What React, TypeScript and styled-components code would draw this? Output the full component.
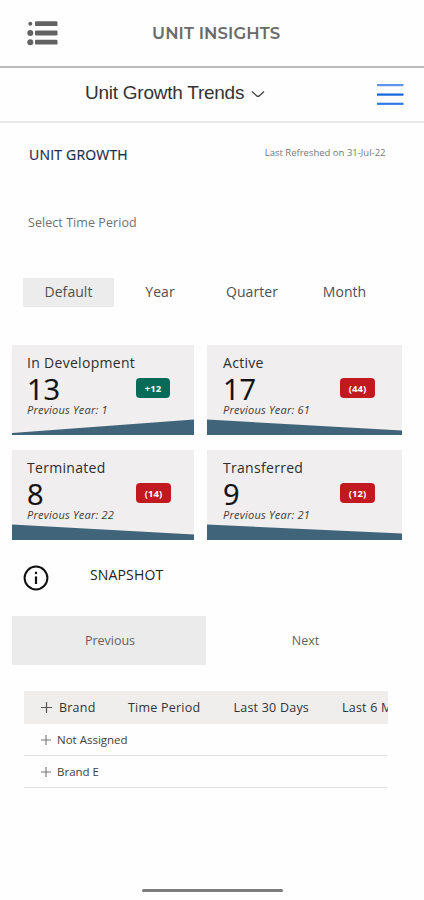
import React from "react";
import styled, { createGlobalStyle } from "styled-components";

const GlobalStyle = createGlobalStyle`
  * { box-sizing: border-box; }
  body {
    margin: 0;
    background: #fefefe;
    font-family: "Open Sans", "Noto Sans", sans-serif;
    color: #333;
  }
  button { font-family: inherit; border: 0; padding: 0; margin: 0; background: none; }
  svg { display: block; flex: none; }
`;

const Screen = styled.div`
  width: 424px;
  height: 900px;
  overflow: hidden;
  display: flex;
  flex-direction: column;
  background: #fefefe;
  white-space: nowrap;
`;

const AppBar = styled.header`
  height: 68px;
  flex: none;
  display: flex;
  align-items: center;
  padding-left: 26px;
  border-bottom: 2px solid #bcbcbc;
`;

const AppTitle = styled.h1`
  margin: 0 0 0 94px;
  font: 600 16.5px/24px "Montserrat", "Inter", sans-serif;
  letter-spacing: 0.12px;
  color: #6a6a6a;
`;

const PageBar = styled.nav`
  height: 55px;
  flex: none;
  display: flex;
  align-items: center;
  justify-content: space-between;
  padding: 0 20px 1px 85px;
  border-bottom: 2px solid #e8e8e8;
`;

const PagePicker = styled.button`
  display: flex;
  align-items: center;
  gap: 7px;
  font: 400 19px/24px "Liberation Sans", Arial, sans-serif;
  letter-spacing: -0.25px;
  margin-top: -2px;
  color: #333;
`;

const SectionHead = styled.div`
  display: flex;
  justify-content: space-between;
  height: 63px;
  padding: 0 38.5px 0 29px;
  flex: none;
`;

const SectionTitle = styled.h2`
  margin: 0;
  padding-top: 22px;
  font-size: 14px;
  font-weight: 400;
  line-height: 20px;
  letter-spacing: 0.2px;
  color: #1c2b4d;
  -webkit-text-stroke: 0.2px #1c2b4d;
`;

const Refreshed = styled.span`
  padding-top: 23px;
  font-size: 9.5px;
  line-height: 14px;
  color: #777;
`;

const PeriodLabel = styled.div`
  margin: 27px 0 0 28px;
  height: 20px;
  flex: none;
  font-size: 12.5px;
  line-height: 20px;
  letter-spacing: 0.06px;
  color: #727272;
`;

const Periods = styled.div`
  display: grid;
  grid-template-columns: 91px 92px 92px 93px;
  margin: 45px 0 0 23px;
  flex: none;
`;

const Period = styled.button<{ $active?: boolean }>`
  height: 29px;
  font-size: 14px;
  line-height: 27px;
  padding-bottom: 2px;
  letter-spacing: 0.05px;
  color: #505050;
  background: ${(p) => (p.$active ? "#ececec" : "transparent")};
`;

const Cards = styled.section`
  display: grid;
  grid-template-columns: 182px 195px;
  grid-auto-rows: 90px;
  gap: 15px 13px;
  margin: 38px 0 0 12px;
  flex: none;
`;

const Card = styled.article`
  display: flex;
  flex-direction: column;
  background: #f0eeef;
`;

const CardBody = styled.div<{ $inset: number }>`
  display: grid;
  grid-template-columns: 1fr 35px;
  grid-template-rows: 20px 28px 14px;
  padding: 8px ${(p) => (p.$inset === 15 ? 23 : 27)}px 0 ${(p) => p.$inset}px;
  height: 74px;
`;

const CardTitle = styled.h3`
  grid-column: 1 / -1;
  margin: 0;
  font-size: 14px;
  font-weight: 400;
  line-height: 20px;
  letter-spacing: 0.3px;
  color: #2d2d2d;
`;

const CardValue = styled.div`
  font-size: 29px;
  line-height: 32px;
  color: #111;
  -webkit-text-stroke: 0.2px #111;
`;

const Delta = styled.span<{ $up?: boolean }>`
  width: ${(p) => (p.$up ? 34 : 35)}px;
  height: 20px;
  margin-top: 5px;
  border-radius: 4px;
  background: ${(p) => (p.$up ? "#086b58" : "#c2181f")};
  color: #fff;
  font-size: 9.5px;
  font-weight: 700;
  line-height: 22px;
  text-align: center;
`;

const CardNote = styled.div`
  margin-top: 2px;
  grid-column: 1 / -1;
  font-size: 11px;
  font-style: italic;
  line-height: 14px;
  letter-spacing: 0.22px;
  color: #3b3b3b;
`;

const SnapshotHead = styled.div`
  display: flex;
  height: 26px;
  margin: 25px 0 0 23px;
  flex: none;
`;

const SnapshotTitle = styled.h2`
  margin: 0 0 0 41px;
  font-size: 14px;
  font-weight: 400;
  line-height: 20px;
  letter-spacing: 0.15px;
  color: #222;
`;

const Pager = styled.div`
  display: grid;
  grid-template-columns: 194px 199px;
  margin: 25px 0 0 12px;
  flex: none;
`;

const PagerButton = styled.button<{ $active?: boolean }>`
  height: 49px;
  padding: 0 0 0 ${(p) => (p.$active ? 2 : 0)}px;
  font-size: 12.5px;
  color: #626262;
  background: ${(p) => (p.$active ? "#ebebeb" : "transparent")};
`;

const Table = styled.div`
  width: 364px;
  margin: 26px 0 0 24px;
  overflow: hidden;
  flex: none;
`;

const HeadRow = styled.div`
  display: grid;
  grid-template-columns: 104px 105.5px 108.5px 80px;
  align-items: center;
  height: 33px;
  padding-bottom: 1px;
  background: #f0eeed;
  font-size: 12.5px;
  letter-spacing: 0.22px;
  color: #333;
`;

const Expander = styled.div<{ $gap: number }>`
  display: flex;
  align-items: center;
  gap: ${(p) => p.$gap}px;
  padding-left: 17px;
`;

const Row = styled.div`
  display: flex;
  align-items: center;
  height: 32px;
  border-bottom: 1px solid #e4e4e4;
  font-size: 11.5px;
  color: #414141;
`;

const HomeIndicator = styled.div`
  width: 141px;
  height: 3px;
  margin: auto auto 8px 142px;
  border-radius: 2px;
  background: #7c7c7c;
`;

const ListIcon = () => (
  <svg width="32" height="26" viewBox="0 0 32 26" fill="#626262">
    <circle cx="4.3" cy="3.7" r="2" />
    <circle cx="4.3" cy="13" r="3" />
    <circle cx="4.3" cy="22.2" r="3" />
    <rect x="9" y="1.3" width="22.5" height="4.8" rx="1.2" />
    <rect x="9" y="10.6" width="22.5" height="4.8" rx="1.2" />
    <rect x="9" y="19.8" width="22.5" height="4.8" rx="1.2" />
  </svg>
);

const Chevron = () => (
  <svg width="14" height="10" viewBox="0 -2 14 10" fill="none" stroke="#444" strokeWidth="1.4">
    <path d="M1 1.5L5.8 5.9Q7 6.8 8.2 5.9L13 1.5" />
  </svg>
);

const MenuIcon = () => (
  <svg width="27" height="23" viewBox="0 0 27 23" strokeWidth="2.2">
    <path d="M0 2.1H26.5" stroke="#5d93e8" />
    <path d="M0 11.6H26.5" stroke="#1264dc" />
    <path d="M0 20.8H26.5" stroke="#2f7ae6" />
  </svg>
);

const InfoIcon = () => (
  <svg width="26" height="26" viewBox="0 0 26 26" fill="none" stroke="#111">
    <circle cx="13" cy="13" r="11.4" strokeWidth="2" />
    <path d="M13 11.4V19" strokeWidth="2.2" />
    <path d="M13 6.8V9.1" strokeWidth="2.2" />
  </svg>
);

const Plus = ({ size, color }: { size: number; color: string }) => (
  <svg width={size} height={size} viewBox="0 0 10 10" stroke={color} strokeWidth="1.1">
    <path d="M5 0V10M0 5H10" />
  </svg>
);

const Wedge = ({ width, left, right }: { width: number; left: number; right: number }) => (
  <svg width={width} height="16" viewBox={`0 0 ${width} 16`}>
    <path d={`M0 ${16 - left}L${width} ${16 - right}V16H0Z`} fill="#40657a" />
  </svg>
);

const metrics = [
  { title: "In Development", value: 13, delta: "+12", previous: 1, up: true, left: 2, right: 15.5 },
  { title: "Active", value: 17, delta: "(44)", previous: 61, up: false, left: 15.5, right: 4.5 },
  { title: "Terminated", value: 8, delta: "(14)", previous: 22, up: false, left: 15.5, right: 5.5 },
  { title: "Transferred", value: 9, delta: "(12)", previous: 21, up: false, left: 15.5, right: 6.5 },
];

export default function App() {
  return (
    <>
      <GlobalStyle />
      <Screen>
        <AppBar>
          <ListIcon />
          <AppTitle>UNIT INSIGHTS</AppTitle>
        </AppBar>
        <PageBar>
          <PagePicker>
            Unit Growth Trends
            <Chevron />
          </PagePicker>
          <MenuIcon />
        </PageBar>
        <SectionHead>
          <SectionTitle>UNIT GROWTH</SectionTitle>
          <Refreshed>Last Refreshed on 31-Jul-22</Refreshed>
        </SectionHead>
        <PeriodLabel>Select Time Period</PeriodLabel>
        <Periods>
          <Period $active>Default</Period>
          <Period>Year</Period>
          <Period>Quarter</Period>
          <Period>Month</Period>
        </Periods>
        <Cards>
          {metrics.map((m, i) => (
            <Card key={m.title}>
              <CardBody $inset={i % 2 ? 16 : 15}>
                <CardTitle>{m.title}</CardTitle>
                <CardValue>{m.value}</CardValue>
                <Delta $up={m.up}>{m.delta}</Delta>
                <CardNote>Previous Year: {m.previous}</CardNote>
              </CardBody>
              <Wedge width={i % 2 ? 195 : 182} left={m.left} right={m.right} />
            </Card>
          ))}
        </Cards>
        <SnapshotHead>
          <InfoIcon />
          <SnapshotTitle>SNAPSHOT</SnapshotTitle>
        </SnapshotHead>
        <Pager>
          <PagerButton $active>Previous</PagerButton>
          <PagerButton>Next</PagerButton>
        </Pager>
        <Table>
          <HeadRow>
            <Expander $gap={7}>
              <Plus size={11} color="#555" />
              Brand
            </Expander>
            <span>Time Period</span>
            <span>Last 30 Days</span>
            <span>Last 6 Months</span>
          </HeadRow>
          {["Not Assigned", "Brand E"].map((name) => (
            <Row key={name}>
              <Expander $gap={6}>
                <Plus size={10} color="#777" />
                {name}
              </Expander>
            </Row>
          ))}
        </Table>
        <HomeIndicator />
      </Screen>
    </>
  );
}
